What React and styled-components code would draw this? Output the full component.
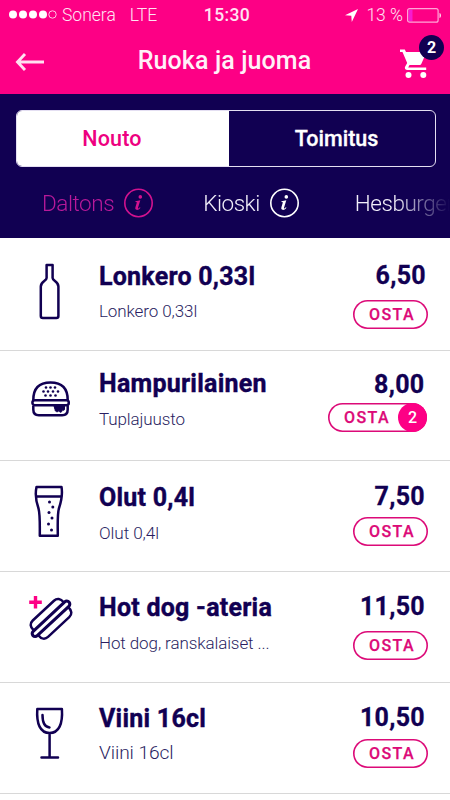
import React from 'react';
import styled, { createGlobalStyle } from 'styled-components';

const pink = '#fd0085';
const outline = '#dc0a78';
const navy = '#110052';

const GlobalStyle = createGlobalStyle`
  * {
    box-sizing: border-box;
  }

  body {
    background-color: #fff;
    font-family: Roboto, sans-serif;
    margin: 0;
  }

  button {
    background: none;
    border: none;
    font-family: inherit;
    margin: 0;
    padding: 0;
  }

  svg {
    display: block;
  }
`;

const Screen = styled.main`
  height: 800px;
  overflow: hidden;
  width: 450px;
`;

const TopBar = styled.header`
  background-color: ${pink};
  color: #ffe3f3;
  height: 94px;
`;

const StatusBar = styled.div`
  align-items: center;
  display: grid;
  font-size: 17.5px;
  font-weight: 300;
  grid-template-columns: 1fr auto 1fr;
  height: 30px;
  line-height: 30px;
  padding: 0 8px 0 9px;
`;

const Carrier = styled.div`
  align-items: center;
  display: flex;

  svg {
    margin-right: 5px;
  }

  span + span {
    margin-left: 14px;
  }
`;

const Clock = styled.div`
  font-weight: 500;
  letter-spacing: 0.4px;
  padding-left: 3px;
`;

const Battery = styled.div`
  align-items: center;
  display: flex;
  justify-content: flex-end;

  span {
    margin: 0 4px 0 8px;
  }
`;

const NavBar = styled.div`
  align-items: center;
  display: grid;
  grid-template-columns: 64px 1fr 64px;
  height: 63px;
  padding: 0 13px 0 15px;
`;

const PageTitle = styled.h1`
  color: #fff0f8;
  font-size: 25px;
  font-weight: 500;
  letter-spacing: 0.1px;
  line-height: 30px;
  margin: 0 0 2px;
  padding-right: 3px;
  text-align: center;
`;

const Cart = styled.button`
  height: 36px;
  justify-self: end;
  margin: 5px 9px 0 0;
  position: relative;
  width: 28px;
`;

const CartCount = styled.span`
  align-items: center;
  background-color: ${navy};
  border-radius: 50%;
  color: #fff;
  display: flex;
  font-size: 16px;
  font-weight: 700;
  height: 25px;
  justify-content: center;
  position: absolute;
  right: -16px;
  top: -11px;
  width: 25px;
`;

const Filters = styled.section`
  background-color: ${navy};
  height: 144px;
  padding: 16px 14px 0 16px;
`;

const Segments = styled.div`
  border: 1.5px solid #e4dff2;
  border-radius: 6px;
  display: grid;
  grid-template-columns: 212px 1fr;
  height: 57px;
  overflow: hidden;
`;

const Segment = styled.button`
  background-color: ${({ $active }) => ($active ? '#fff' : 'transparent')};
  color: ${({ $active }) => ($active ? '#ee0080' : '#fff')};
  font-size: 21.5px;
  font-weight: 500;
  letter-spacing: ${({ $active }) => ($active ? '0.2px' : '0')};
  padding-right: ${({ $active }) => ($active ? '22px' : '0')};
  padding-left: ${({ $active }) => ($active ? '0' : '9px')};
  -webkit-text-stroke: ${({ $active }) => ($active ? '0' : '0.3px')};
`;

const Vendors = styled.nav`
  display: flex;
  height: 71px;
  margin-right: -14px;
  mask-image: linear-gradient(to right, #000 378px, transparent 434px);
  overflow: hidden;
  padding-left: 26px;
`;

const Vendor = styled.a`
  align-items: center;
  color: ${({ $active }) => ($active ? '#b9199a' : '#f2effa')};
  display: flex;
  flex-shrink: 0;
  font-size: 22.5px;
  font-weight: 300;
  height: 72px;
  letter-spacing: -0.45px;
  margin-right: ${({ $active }) => ($active ? '50px' : '56px')};

  svg {
    color: ${({ $active }) => ($active ? '#d2128f' : '#fff')};
    margin-left: 10px;
  }
`;

const Products = styled.ul`
  list-style: none;
  margin: 0;
  padding: 0;
`;

const Row = styled.li`
  border-bottom: 1px solid #d8d8d8;
  color: ${navy};
  display: grid;
  grid-template-columns: 99px 1fr auto;
  height: ${({ $height }) => $height}px;
`;

const Picture = styled.div`
  padding-left: 25px;
  padding-top: ${({ $top }) => $top}px;
`;

const Details = styled.div`
  padding-top: ${({ $top }) => $top}px;
`;

const Name = styled.h2`
  font-size: 25px;
  font-weight: 700;
  letter-spacing: 0.24px;
  line-height: 28px;
  margin: 0;
  -webkit-text-stroke: 0.4px ${navy};
`;

const Description = styled.p`
  color: #2a1e62;
  font-size: ${({ $size }) => $size}px;
  font-weight: 300;
  letter-spacing: -0.1px;
  line-height: 20px;
  margin: ${({ $gap }) => $gap}px 0 0;
`;

const Purchase = styled.div`
  align-items: flex-end;
  display: flex;
  flex-direction: column;
  padding-right: ${({ $right }) => $right}px;
  padding-top: ${({ $top }) => $top}px;
`;

const Price = styled.span`
  font-size: 25px;
  font-weight: 700;
  letter-spacing: 0.3px;
  line-height: 28px;
  padding-right: ${({ $inset }) => $inset}px;
  -webkit-text-stroke: 0.3px ${navy};
`;

const BuyButton = styled.button`
  align-items: center;
  border-radius: 15px;
  box-shadow: inset 0 0 0 1.6px ${outline};
  color: ${outline};
  display: flex;
  font-size: 16px;
  font-weight: 500;
  height: 29px;
  letter-spacing: 1.4px;
  margin-top: ${({ $gap }) => $gap}px;
  padding-left: 16px;
  width: ${({ $wide }) => ($wide ? 99 : 75)}px;
  -webkit-text-stroke: 0.25px ${outline};
`;

const Quantity = styled.span`
  background-color: ${pink};
  border-radius: 50%;
  color: #fff;
  flex-shrink: 0;
  height: 29px;
  letter-spacing: 0;
  line-height: 29px;
  margin-left: auto;
  text-align: center;
  width: 29px;
  -webkit-text-stroke: 0;
`;

const SignalDots = () => (
  <svg width="48" height="10" viewBox="0 0 48 10">
    {[4, 14, 24, 34].map((x) => (
      <circle key={x} cx={x} cy="4.5" r="4" fill="#fff" />
    ))}
    <circle cx="43.5" cy="4.5" r="3.7" fill="none" stroke="#ffc4e4" />
  </svg>
);

const LocationArrow = () => (
  <svg width="13" height="13" viewBox="0 0 13 13">
    <path d="M13 0L0 6.2l6.3.6.5 6.2z" fill="#fff" />
  </svg>
);

const BatteryLevel = () => (
  <svg width="35" height="15" viewBox="0 0 35 15">
    <rect x="1.5" y="1.5" width="4" height="12" fill="#f61bd0" />
    <rect x=".6" y=".6" width="30.5" height="13.6" rx="2" fill="none" stroke="#ffa6d8" strokeWidth="1.2" />
    <path d="M32.5 5v5c2-.5 2-4.5 0-5z" fill="#ffd5ec" />
  </svg>
);

const BackArrow = () => (
  <svg width="30" height="20" viewBox="0 0 30 20">
    <path d="M10 2L2.5 10l7.5 8M2.5 10H29" fill="none" stroke="#ffe0f0" strokeWidth="2.9" />
  </svg>
);

const CartIcon = () => (
  <svg width="28" height="30" viewBox="0 0 28 30">
    <g fill="#fff">
      <path d="M0 .4h4.8L6 3h20.500l-5 11.500c-.5 1-1.200 1.500-2.200 1.500H9.500L8.200 18.500h18V21H7.500c-2.200 0-3.300-1.800-2.300-3.600l2-3.500L2.500 3H0z" />
      <circle cx="8.5" cy="26" r="3" />
      <circle cx="23.3" cy="26" r="3" />
    </g>
  </svg>
);

const InfoIcon = () => (
  <svg width="29" height="30" viewBox="0 0 29 30">
    <circle cx="14.5" cy="15" r="13.7" fill="none" stroke="currentColor" strokeWidth="1.6" />
    <circle cx="16.3" cy="8.9" r="1.8" fill="currentColor" />
    <path
      d="M11.500 13.200l4.800-1-2.300 7.600c-.2.900.4.900 1.900-.6l.6.500c-1.600 2-2.900 2.500-4.100 2.100-1.300-.4-1.300-1.500-.9-2.800l1.400-4.700-1.500-.3z"
      fill="currentColor"
    />
  </svg>
);

const Icon = ({ children }) => (
  <svg width="50" height="60" viewBox="0 0 50 60" fill="none" stroke={navy} strokeWidth="2.5" strokeLinejoin="round">
    {children}
  </svg>
);

const BottleIcon = () => (
  <Icon>
    <path d="M21.600 3h6v13c0 3 5.800 3.500 5.800 8.500V54a2 2 0 0 1-2 2H17.800a2 2 0 0 1-2-2V24.500c0-5 5.800-5.500 5.800-8.500z" />
  </Icon>
);

const BurgerIcon = () => (
  <Icon>
    <path d="M8.300 22C8.300 10 15 4.500 25.500 4.500S42.700 10 42.700 22" />
    <rect x="7.4" y="22.2" width="36.4" height="5" rx="2.5" />
    <path d="M8.300 27.500v4c0 4 2 5.700 5.500 5.700h23.400c3.500 0 5.500-1.700 5.500-5.700v-4" />
    <path d="M29 28h10.500v3.500c0 1-2 1-2 0-.5 3.500-3 3.500-3.500 1-1 2-4 1.500-4-1z" fill={navy} strokeWidth="1" />
    <g fill={navy} stroke="none">
      {[
        [21, 9.5], [25.5, 9.5], [30, 9.5], [18.5, 13.5], [23, 13.5],
        [28, 13.5], [33, 13.5], [20.5, 17.5], [25.5, 17.5], [30.5, 17.5],
      ].map(([x, y]) => (
        <circle key={`${x}-${y}`} cx={x} cy={y} r="1.3" />
      ))}
    </g>
  </Icon>
);

const BeerIcon = () => (
  <Icon>
    <path d="M11.500 4h25c1.400 8-.4 15-2.600 21.500-1.700 6-1.100 18-1.100 27.300h-18c0-9.300.4-21.300-1.300-27.300C11.200 19 9.800 12 11.500 4zM10.800 13.500h26.500" />
    <g fill={navy} stroke="none">
      {[[24.5, 19], [27.8, 24], [24, 29.5], [27, 35], [23.5, 41], [26.5, 47]].map(([x, y]) => (
        <circle key={y} cx={x} cy={y} r="1.5" />
      ))}
    </g>
  </Icon>
);

const HotDogIcon = () => (
  <Icon>
    <g transform="translate(26 25.8) rotate(-43)">
      <path d="M-20.500-3.400C-21-8.500-18.500-11.200-14.500-11.200h29c4 0 6.500 2.700 6 7.800" />
      <path d="M-20.500 3.400C-21 8.500-18.500 11.200-14.500 11.200h29c4 0 6.500-2.700 6-7.800" />
      <rect x="-24.6" y="-3" width="49.2" height="6" rx="3" strokeWidth="3.1" />
    </g>
    <path d="M10.500 3v12.500M4.200 9.200h12.600" stroke={pink} strokeWidth="3.4" />
  </Icon>
);

const WineIcon = () => (
  <Icon>
    <path d="M12.300 4h24.600c1 15-3 24-12.300 24S11.300 19 12.300 4zM24.600 28v24" />
    <path d="M16.500 52.500h16.500M17.500 10c0 7 1.600 12 7 12.500" strokeLinecap="round" />
  </Icon>
);

const products = [
  {
    name: 'Lonkero 0,33l',
    description: 'Lonkero 0,33l',
    price: '6,50',
    icon: BottleIcon,
    height: 113,
    top: 25,
    iconTop: 24,
    priceTop: 24,
    gap: 10,
    textGap: 9.5,
    inset: 2,
    right: 22,
    size: 17,
  },
  {
    name: 'Hampurilainen',
    description: 'Tuplajuusto',
    price: '8,00',
    quantity: 2,
    icon: BurgerIcon,
    height: 110,
    top: 19,
    iconTop: 27,
    priceTop: 20,
    gap: 4,
    textGap: 10.5,
    inset: 2.5,
    right: 23,
    size: 17,
  },
  {
    name: 'Olut 0,4l',
    description: 'Olut 0,4l',
    price: '7,50',
    icon: BeerIcon,
    height: 111,
    top: 23,
    iconTop: 22,
    priceTop: 22,
    gap: 6,
    textGap: 10.5,
    inset: 3,
    right: 22,
    size: 17.2,
  },
  {
    name: 'Hot dog -ateria',
    description: 'Hot dog, ranskalaiset ...',
    price: '11,50',
    icon: HotDogIcon,
    height: 111,
    top: 22,
    iconTop: 21,
    priceTop: 21,
    gap: 10,
    textGap: 10.5,
    inset: 3,
    right: 22,
    size: 17,
  },
  {
    name: 'Viini 16cl',
    description: 'Viini 16cl',
    price: '10,50',
    icon: WineIcon,
    height: 111,
    top: 22,
    iconTop: 22,
    priceTop: 21,
    gap: 7,
    textGap: 10,
    inset: 3,
    right: 22,
    size: 19.2,
  },
];

const Product = ({ data }) => {
  const { name, description, price, quantity, icon: ProductIcon, height, top, iconTop, priceTop, gap, textGap, inset, right, size } = data;

  return (
    <Row $height={height}>
      <Picture $top={iconTop}>
        <ProductIcon />
      </Picture>
      <Details $top={top}>
        <Name>{name}</Name>
        <Description $size={size} $gap={textGap}>
          {description}
        </Description>
      </Details>
      <Purchase $top={priceTop} $right={right}>
        <Price $inset={inset}>{price}</Price>
        <BuyButton $gap={gap} $wide={Boolean(quantity)}>
          OSTA
          {quantity && <Quantity>{quantity}</Quantity>}
        </BuyButton>
      </Purchase>
    </Row>
  );
};

const App = () => (
  <>
    <GlobalStyle />
    <Screen>
      <TopBar>
        <StatusBar>
          <Carrier>
            <SignalDots />
            <span>Sonera</span>
            <span>LTE</span>
          </Carrier>
          <Clock>15:30</Clock>
          <Battery>
            <LocationArrow />
            <span>13 %</span>
            <BatteryLevel />
          </Battery>
        </StatusBar>
        <NavBar>
          <BackArrow />
          <PageTitle>Ruoka ja juoma</PageTitle>
          <Cart>
            <CartIcon />
            <CartCount>2</CartCount>
          </Cart>
        </NavBar>
      </TopBar>
      <Filters>
        <Segments>
          <Segment $active>Nouto</Segment>
          <Segment>Toimitus</Segment>
        </Segments>
        <Vendors>
          <Vendor $active>
            Daltons
            <InfoIcon />
          </Vendor>
          <Vendor>
            Kioski
            <InfoIcon />
          </Vendor>
          <Vendor>Hesburger</Vendor>
        </Vendors>
      </Filters>
      <Products>
        {products.map((product) => (
          <Product key={product.name} data={product} />
        ))}
      </Products>
    </Screen>
  </>
);

export default App;
